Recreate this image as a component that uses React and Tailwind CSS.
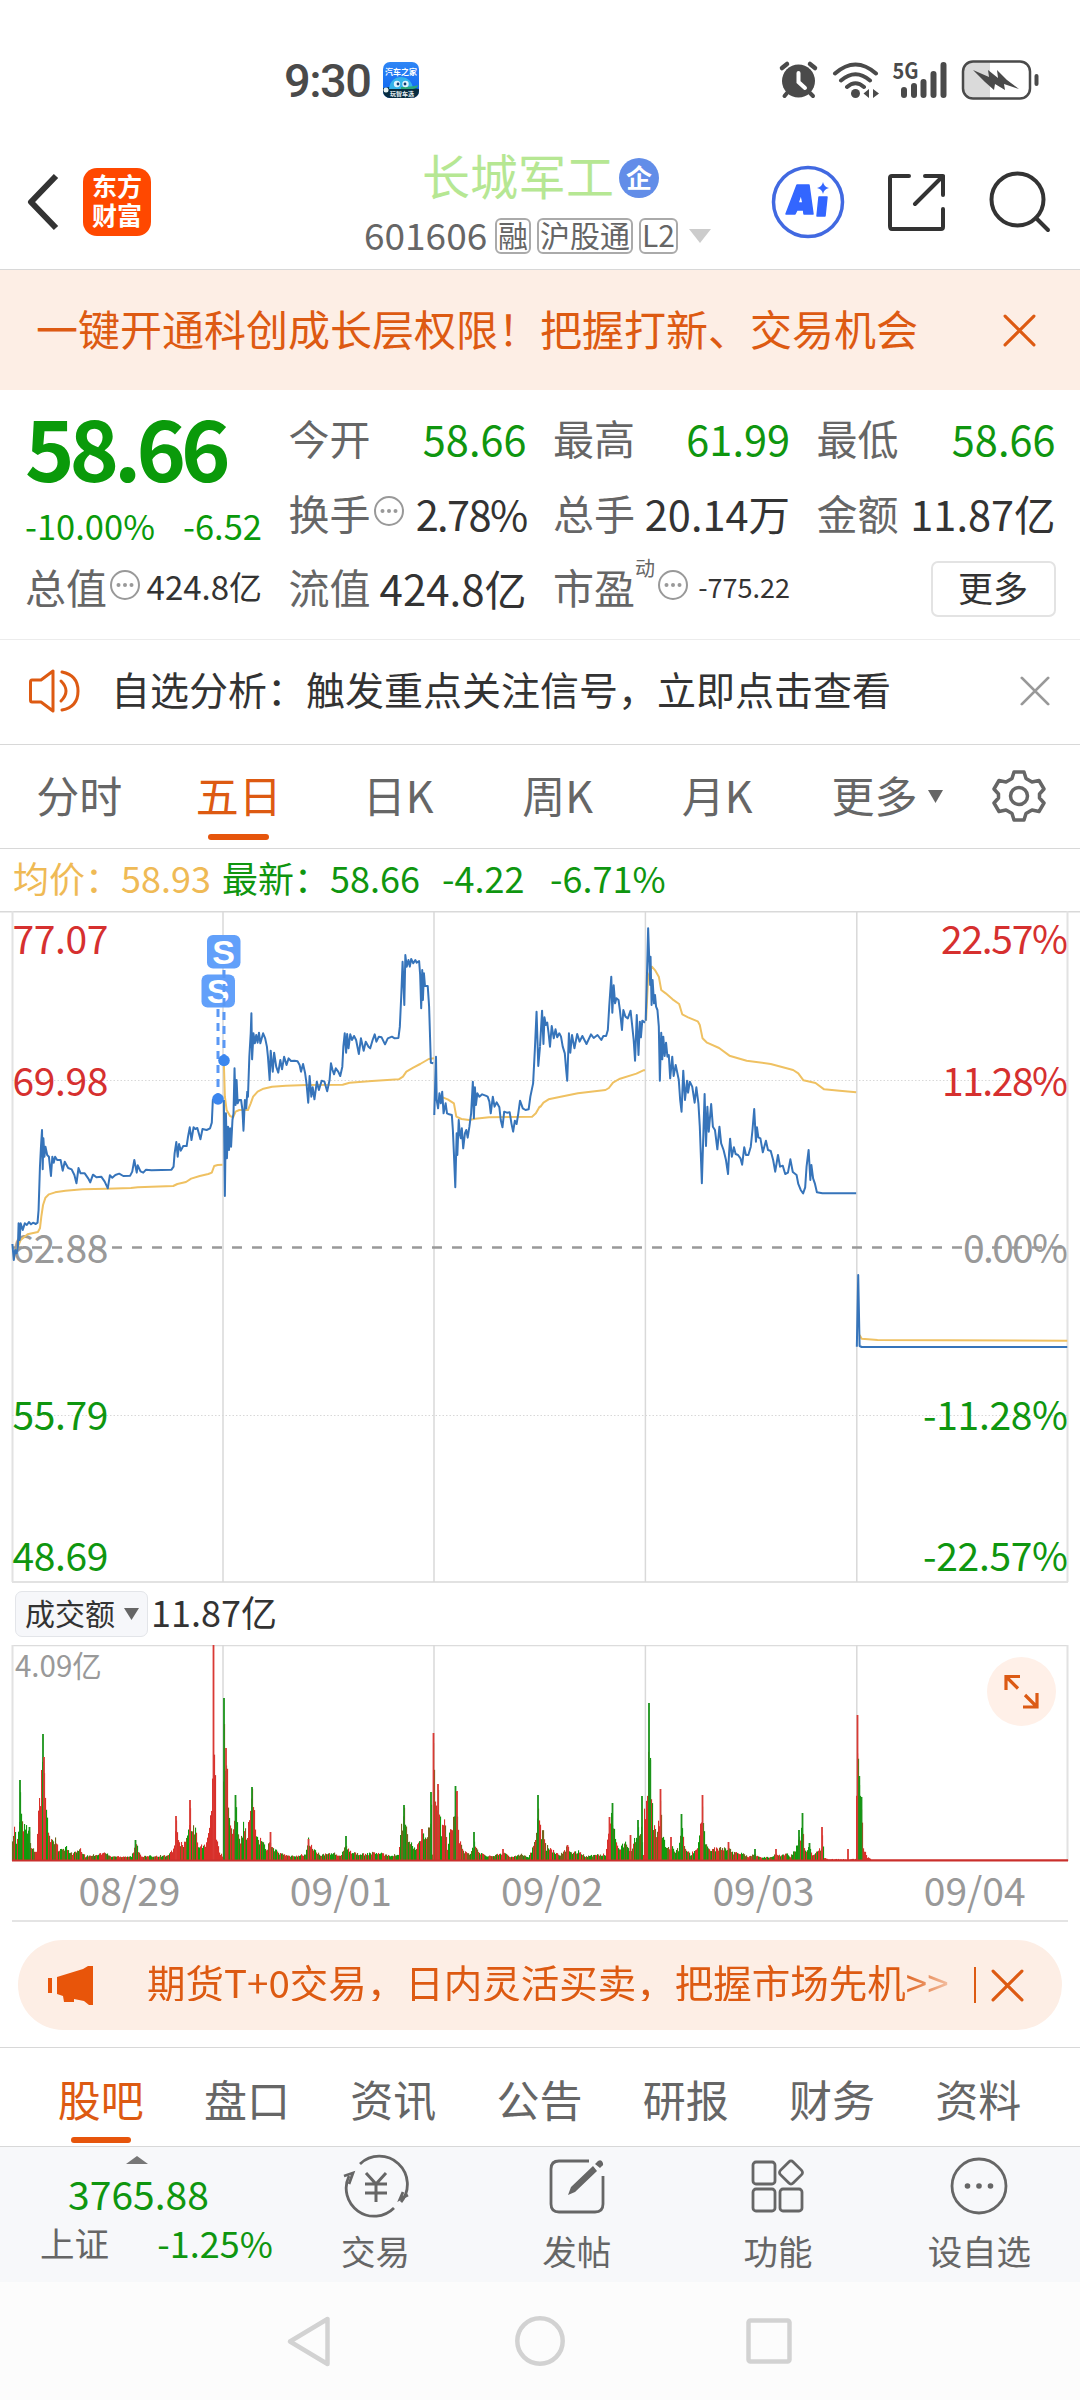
const gridX = [223, 434, 645.4, 856.8];

// price lines, left half (days 1-3) and right half (days 3-5)
const priceLeft = [
  '36,1032 40,1080 44,1050 48,1060 52,1040 54,970 57,1020 60,970 66,990 72,970 78,975 84,966 90,973 96,968 104,972 109,968 112,930 116,800 119,740 122,690 124,808 126,715 129,770 132,740 137,765 142,770 148,828 152,770 156,788 160,770 166,780 176,780 182,812 188,785 198,804 208,808 216,825 222,850 228,804 234,820 246,820 256,835 262,847 270,824 280,832 294,830 304,845 313,865 319,826 326,833 335,825 346,821 358,828 378,827 384,815 390,780 397,818 400,796 408,814 416,818 424,809 440,811 498,809 504,800 507,760 512,726 516,770 520,732 525,752 532,738 542,738 546,710 551,682 556,720 562,682 567,687 573,684 582,718 588,687 600,690 610,685 615,668 618,600 624,597 646,597',
  '650,600 653,888 656,640 659,775 662,680 665,750 668,685 671,740 675,660 678,640 681,505 684,615 687,540 690,610 694,600 700,600 704,630 707,692 711,600 715,625 718,575 720,590 724,470 728,400 730,340 732,478 736,400 740,430 744,405 748,428 752,398 756,430 760,415 764,400 770,415 775,440 778,470 783,540 786,452 792,515 796,458 802,500 808,518 814,480 819,508 825,470 832,495 838,475 845,483 855,482 864,484 870,495 874,515 880,492 886,520 890,550 895,608 899,528 904,590 908,562 913,598 920,545 926,570 934,542 942,545 950,574 957,540 961,490 965,508 970,523 975,505 982,515 988,528 994,500 997,440 1001,400 1005,458 1008,402 1012,445 1017,403 1022,420 1028,408 1034,420 1042,462 1048,415 1056,452 1062,425 1070,440 1075,445 1082,420 1088,403 1093,425 1100,410 1108,412 1118,433 1126,415 1138,410 1146,415 1157,414 1161,380 1165,290 1169,185 1174,315 1177,165 1181,200 1186,180 1190,200 1194,177 1200,190 1206,180 1210,188 1217,183 1220,225 1223,325 1226,210 1228,300 1231,220 1234,258 1242,258 1246,320 1249,420 1251,488 1258,490',
  '1261,645 1266,470 1268,600 1272,625 1276,580 1280,610 1284,575 1288,640 1294,610 1298,640 1304,643 1312,645 1315,690 1318,760 1322,862 1326,700 1328,765 1332,660 1335,700 1338,715 1341,685 1345,745 1350,700 1354,690 1358,713 1363,680 1368,640 1373,545 1376,655 1379,562 1382,615 1386,580 1392,590 1400,583 1410,587 1416,590 1421,605 1425,640 1431,590 1436,620 1442,607 1450,622 1454,660 1459,682 1464,635 1472,638 1480,637 1485,670 1490,695 1495,662 1500,672 1505,640 1510,602 1518,625 1526,630 1535,628 1540,590 1548,550 1553,450 1558,335 1563,498 1568,440',
];
const priceRight = [
  '0,440 6,332 10,432 13,352 17,375 21,368 25,400 29,440 34,378 40,415 45,388 50,412 56,400 61,410 66,440 72,460 76,510 79,542 84,400 88,458 93,405 100,445 108,402 115,425 123,408 135,432 148,403 156,414 167,405 178,420 184,408 192,408 197,390 201,320 207,230 210,338 214,256 218,310 222,295 228,300 232,330 238,390 242,330 248,350 255,355 263,332 267,370 272,420 276,482 281,345 286,465 290,365 293,412 297,362 305,368',
  '307,362 310,250 314,85 318,200 320,255 321,170 324,315 327,240 331,310 334,285 337,320 341,330 345,380 348,542 352,398 355,478 358,410 362,468 366,428 370,470 374,465 378,535 384,470 388,528 394,495 398,515 403,540 407,600 411,635 416,512 421,600 427,542 430,578 435,545 442,560 449,608 454,562 460,610 464,680 470,850 475,680 478,582 482,738 486,620 490,695 497,612 502,680 508,690 515,748 521,680 526,730 533,750 540,780 546,822 549,760 552,716 557,770 563,742 568,762 575,765 582,775 587,794 593,742 598,765 605,765 612,740 617,690 622,627 627,725 630,682 634,712 640,715 647,757 656,722 662,750 670,753 677,780 683,815 691,765 697,800 705,797 712,822 720,818 727,778 734,816 745,825 750,852 757,870 764,880 770,862 774,800 780,750 785,840 788,795 793,835 798,850 804,877 820,880 918,880',
  '920,1340 924,1125 928,1338 934,1341 1531,1341',
];
const avgLeft = [
  '45,1058 60,1020 80,1003 110,996 116,985 120,950 125,915 132,893 142,883 160,877 190,872 240,868 310,866 380,864 400,862 440,860 503,858 515,852 540,846 555,836 580,828 605,822 615,818 622,798 632,795 646,794',
  '650,490 653,590 658,630 668,648 677,652 684,635 695,630 720,630 728,610 735,590 748,575 765,566 790,560 830,557 890,555 995,554 1015,548 1080,543 1158,538 1170,530 1180,515 1200,503 1220,492 1245,477 1260,475',
  '1280,590 1300,598 1318,610 1325,650 1340,657 1362,660 1380,656 1420,652 1545,650 1556,640 1568,618',
];
const avgRight = [
  '0,622 10,608 25,598 60,590 110,580 190,570 200,564 212,548 230,537 280,521 300,511 305,511',
  '308,362 314,230 325,200 335,212 345,230 352,270 365,280 385,298 404,312 413,343 430,352 458,364 464,375 472,415 485,428 520,444 550,467 600,482 670,492 735,510 750,520 765,541 800,549 825,568 870,572 918,577',
  '928,1305 934,1316 980,1320 1531,1322',
];

// volume outline: x, height
const volume = [
  [12, 24], [14, 35], [16, 20], [18, 30], [19, 40], [20, 70], [22, 49], [24, 35], [26, 39], [29, 34], [30, 18], [34, 10], [36, 12], [37, 38], [39, 68], [41, 90], [43, 110], [45, 72],
  [47, 44], [49, 25], [52, 25], [56, 22], [58, 10], [66, 13], [72, 7], [80, 11], [85, 4], [105, 8], [110, 4], [131, 4], [136, 17], [140, 6], [142, 4],
  [168, 5], [173, 12], [176, 42], [178, 21], [184, 18], [188, 32], [190, 50], [192, 32], [194, 36], [198, 20], [202, 14], [206, 22], [209, 34], [211, 60],
  [213, 120], [215, 90], [216, 25], [219, 8], [222, 5], [223, 90], [224, 140], [226, 113], [229, 53], [232, 27], [235, 60], [237, 46], [240, 25], [243, 38],
  [247, 28], [249, 45], [251, 74], [253, 66], [255, 33], [258, 25], [263, 20], [266, 12], [270, 24], [273, 12], [280, 7], [290, 4], [305, 6], [308, 22],
  [313, 12], [320, 5], [332, 8], [340, 4], [344, 12], [346, 20], [349, 10], [360, 6], [375, 8], [390, 5], [398, 6], [401, 37], [404, 50], [406, 37],
  [409, 20], [415, 12], [422, 28], [426, 22], [428, 32], [431, 66], [432, 5], [433, 110], [435, 68], [438, 72], [441, 35], [444, 44], [447, 15], [449, 30], [452, 30],
  [455, 70], [457, 60], [459, 25], [463, 10], [470, 6], [474, 20], [478, 8], [490, 4], [503, 8], [510, 3], [521, 7], [528, 3], [532, 12], [536, 30],
  [538, 62], [541, 32], [543, 34], [546, 15], [552, 10], [560, 6], [567, 14], [572, 8], [578, 10], [585, 4], [598, 6], [605, 6], [608, 30], [612, 52],
  [615, 26], [620, 12], [624, 21], [630, 10], [634, 22], [638, 32], [641, 42], [643, 5], [644, 52], [647, 70], [649, 140], [651, 75], [653, 36], [657, 28], [660, 60], [662, 30],
  [666, 13], [670, 16], [674, 10], [678, 12], [681, 42], [684, 14], [690, 6], [696, 12], [699, 32], [702, 60], [704, 28], [708, 14], [714, 12], [727, 14],
  [732, 8], [740, 8], [748, 4], [755, 6], [760, 3], [770, 3], [776, 7], [780, 5], [786, 7], [790, 4], [795, 12], [798, 20], [802, 40], [804, 12],
  [806, 8], [809, 14], [812, 5], [818, 12], [821, 12], [822, 30], [824, 3], [830, 2], [855, 2], [857, 120], [859, 85], [861, 73], [863, 15], [867, 4], [872, 1], [1068, 1],
];
const spikes = [
  [20, 81, 'g'], [43, 127, 'g'], [44, 104, 'r'], [29.5, 34, 'g'], [135.5, 21, 'g'], [176, 45, 'r'], [190, 61, 'r'], [213.5, 216, 'r'], [224, 163, 'g'], [226, 113, 'r'],
  [235.5, 66, 'g'], [252, 74, 'g'], [270.5, 29, 'r'], [308.5, 22, 'r'], [346, 25, 'g'], [404, 56, 'g'], [422, 32, 'r'], [431, 69, 'g'], [433.5, 128, 'r'], [438, 77, 'r'],
  [455.5, 75, 'g'], [457, 70, 'r'], [474, 29, 'g'], [503, 12, 'r'], [538, 66, 'g'], [567.5, 16, 'r'], [609.5, 44, 'r'], [612.5, 58, 'g'], [630.5, 26, 'r'], [638, 41, 'g'],
  [642, 65, 'g'], [649, 158, 'g'], [650.2, 101, 'g'], [660.5, 72, 'r'], [671, 24, 'r'], [681.5, 47, 'g'], [702.5, 66, 'r'], [728.5, 19, 'r'], [755, 12, 'g'], [776, 12, 'r'],
  [799, 31, 'g'], [802.5, 48, 'g'], [809.5, 18, 'g'], [822, 34, 'r'], [848, 12, 'r'], [857.5, 146, 'r'], [859.3, 85, 'g'], [861.5, 64, 'g'],
];
const redZones = [[36, 41], [170, 178], [206, 222], [232, 234], [247, 253], [606, 610], [643, 648], [824, 857], [863, 1068]];

function noise(n) {
  const v = Math.sin(n * 127.1) * 43758.5453;
  return v - Math.floor(v);
}

const bars = [];
for (let x = 12; x < 1068; x++) {
  let k = 0;
  while (k < volume.length - 2 && volume[k + 1][0] <= x) k++;
  const [x0, h0] = volume[k];
  const [x1, h1] = volume[k + 1];
  const top = h0 + ((h1 - h0) * (x - x0)) / (x1 - x0);
  const h = x > 870 ? 1.5 : Math.max(1.5, top * (0.68 + noise(x) * 0.4) + (top < 15 && x < 820 ? 1 : 0));
  const red = redZones.some(([a, b]) => x >= a && x <= b) || noise(x + 3000) > 0.66;
  bars.push([x, h, red ? '#d8302a' : noise(x + 9000) > 0.6 ? '#71651a' : '#109a0c']);
}

const stats = [
  { label: '今开', value: '58.66', color: 'text-[#0f960f]' },
  { label: '最高', value: '61.99', color: 'text-[#0f960f]' },
  { label: '最低', value: '58.66', color: 'text-[#0f960f]' },
  { label: '换手', value: '2.78%', color: 'text-[#333] tracking-[-1.6px]', tip: true },
  { label: '总手', value: '20.14万', color: 'text-[#333]' },
  { label: '金额', value: '11.87亿', color: 'text-[#333]' },
];
const periods = ['分时', '五日', '日K', '周K', '月K'];
const sections = ['股吧', '盘口', '资讯', '公告', '研报', '财务', '资料'];

function Tip() {
  return (
    <svg className="w-[32px] h-[32px] shrink-0 mx-[2px] mt-[-4px]" viewBox="0 0 32 32" fill="none">
      <circle cx="16" cy="16" r="14" stroke="#999" strokeWidth="2" />
      <g fill="#999">
        <circle cx="9.5" cy="16" r="2" /><circle cx="16" cy="16" r="2" /><circle cx="22.5" cy="16" r="2" />
      </g>
    </svg>
  );
}

function Close({ className, width = 3 }) {
  return (
    <svg className={className} viewBox="0 0 32 32" fill="none" stroke="currentColor" strokeWidth={width} strokeLinecap="round">
      <path d="M2 2 30 30M30 2 2 30" />
    </svg>
  );
}

function StatusBar() {
  return (
    <div className="h-[135px] pt-[25px] flex items-center text-[#4a4a4a]">
      <div className="ml-[284px] w-[89px] text-[47px] font-medium font-[Roboto,sans-serif] leading-none tracking-[-1.5px]">9:30</div>
      <svg className="w-[36px] h-[36px] ml-[10px]" viewBox="0 0 36 36">
        <defs>
          <clipPath id="app"><rect width="36" height="36" rx="7" /></clipPath>
          <linearGradient id="sky" x1="0" y1="0" x2="0" y2="1"><stop offset="0" stopColor="#2f86f5" /><stop offset="1" stopColor="#0a62f0" /></linearGradient>
        </defs>
        <g clipPath="url(#app)">
          <rect width="36" height="36" fill="url(#sky)" />
          <path d="M0 26Q18 23 36 27V36H0Z" fill="#072c3f" />
          <path d="M6 27C7 11 29 11 30 27Z" fill="#33b3ea" />
          <path d="M18 27h12q5-1 5-4-6 2-17 2Z" fill="#2ba87c" />
          <circle cx="14" cy="22" r="3.2" fill="#dff4ff" /><circle cx="22.500" cy="22" r="3.200" fill="#dff4ff" />
          <circle cx="15" cy="22" r="1.400" fill="#123b70" /><circle cx="22" cy="22" r="1.400" fill="#123b70" />
          <circle cx="3" cy="28" r="2.500" fill="#e8f4f4" />
          <text x="18" y="13" fontSize="8" fontWeight="700" fill="#fff" textAnchor="middle">汽车之家</text>
          <text x="19" y="34" fontSize="6" fontWeight="700" fill="#e9f1f4" textAnchor="middle">玩智车选</text>
        </g>
      </svg>
      <svg className="w-[262px] h-[48px] ml-[358px]" viewBox="777 55 262 48" fill="none" stroke="#4a4a4a">
        <circle cx="798.500" cy="80" r="16.500" fill="#4a4a4a" stroke="none" />
        <path d="M782 67 787 63M815 67 810 63" strokeWidth="4.500" strokeLinecap="round" />
        <path d="M787 92 784.500 95M810 92 813 95" strokeWidth="4" strokeLinecap="round" />
        <path d="M798.500 72V81L805 87" stroke="#fff" strokeWidth="4" strokeLinecap="round" />
        <path d="M835 72.500Q855.500 54.500 876 72.500M841 79.500Q855.500 67 870 79.500M847 86Q855.500 78.500 864 86" strokeWidth="4" strokeLinecap="round" />
        <circle cx="855.500" cy="92.500" r="4.500" fill="#4a4a4a" stroke="none" />
        <path d="M863.500 92.500 869 88V97ZM879 92.500 873 88V97Z" fill="#4a4a4a" stroke="none" />
        <text x="892.500" y="78" fontSize="22" fontWeight="700" fill="#4a4a4a" stroke="none" textLength="26" lengthAdjust="spacingAndGlyphs">5G</text>
        <path d="M904 89V94M914 85V94M923.500 81V94M933.500 73V94M943.500 64V94" strokeWidth="6" strokeLinecap="round" />
        <path d="M972 60.500H990V97.500H972Q963 97.500 963 88.500V69.500Q963 60.500 972 60.500Z" fill="#dadada" stroke="none" />
        <rect x="963" y="60.500" width="67" height="37" rx="10" strokeWidth="2.500" />
        <path d="M1036.500 75V83" strokeWidth="4" strokeLinecap="round" />
        <path d="M973 69 989 76 988 69 998 77 997 69 1007 79 1019 88 1004 83 1005 89 995 83 994 89 985 81Z" fill="#4a4a4a" stroke="none" />
      </svg>
    </div>
  );
}

function Header() {
  const tag = 'h-[36px] px-px border-2 border-[#aaa] rounded-[6px] text-[30px] leading-[29px] text-[#666] whitespace-nowrap';
  return (
    <div className="h-[135px] border-b border-[#d8d8d8] flex items-center">
      <svg className="w-[34px] h-[58px] ml-[26px]" viewBox="0 0 34 58" fill="none" stroke="#333" strokeWidth="6">
        <path d="M30 3 5 29 30 55" strokeLinejoin="round" />
      </svg>
      <div className="ml-[23px] w-[68px] h-[68px] rounded-[14px] bg-[#ff4800] text-white text-[25px] font-bold leading-[29px] text-center pt-[3px]">
        东方<br />财富
      </div>
      <div className="ml-[213px] w-[352px] mt-[9px]">
        <div className="h-[58px] pl-[58px] flex items-center text-[#b6e793]">
          <span className="text-[48px] leading-[58px] mt-[-8px]">长城军工</span>
          <span className="w-[40px] h-[40px] ml-[5px] rounded-full bg-[#628de8] text-white text-[26px] font-bold leading-[37px] text-center">企</span>
        </div>
        <div className="h-[58px] flex items-center gap-[6px]">
          <span className="text-[37px] leading-[58px] mt-[-4px] w-[125px] text-[#666] whitespace-nowrap">601606</span>
          <span className={tag}>融</span>
          <span className={tag}>沪股通</span>
          <span className={tag}>L2</span>
          <svg className="w-[22px] h-[14px] ml-[5px]" viewBox="0 0 22 14"><path d="M0 0H22L11 14Z" fill="#ccc" /></svg>
        </div>
      </div>
      <svg className="w-[74px] h-[74px] ml-[55px]" viewBox="0 0 74 74">
        <circle cx="37" cy="37" r="34.500" fill="none" stroke="#4169e1" strokeWidth="3.500" />
        <path d="M26 20H38L42 49H33L32.500 45H26L24 49H15ZM30 29 27 38H32Z" fill="#3366ff" stroke="#3366ff" strokeWidth="1.500" strokeLinejoin="round" fillRule="evenodd" />
        <path d="M48 32H56L54 51H46Z" fill="#3366ff" stroke="#3366ff" strokeWidth="1.500" strokeLinejoin="round" />
        <path d="M52 17Q53 22 58 23Q53 24 52 29Q51 24 46 23Q51 22 52 17Z" fill="#3366ff" />
      </svg>
      <svg className="w-[58px] h-[58px] ml-[42px]" viewBox="0 0 58 58" fill="none" stroke="#333" strokeWidth="4" strokeLinecap="round" strokeLinejoin="round">
        <path d="M22 3H5Q3 3 3 5V53Q3 56 5 56H54Q56 56 56 54V36M38 3H56V22M56 3 28 31" />
      </svg>
      <svg className="w-[62px] h-[62px] ml-[44px]" viewBox="0 0 62 62" fill="none" stroke="#333" strokeWidth="4" strokeLinecap="round">
        <circle cx="28.500" cy="28.500" r="26" /><path d="M47 47 59 59" />
      </svg>
    </div>
  );
}

function Quote() {
  return (
    <div className="h-[250px] border-b border-[#ececec] pt-[13px] pl-[25px] grid grid-cols-[237px_238px_237px_239px] grid-rows-[76px_74px_74px] gap-x-[26.500px] whitespace-nowrap">
      <div className="row-span-2 text-[#0a9a0a]">
        <div className="h-[98px] text-[84px] font-bold leading-[86px] tracking-[-5px]">58.66</div>
        <div className="h-[52px] flex justify-between text-[34.500px] leading-[48px]"><span>-10.00%</span><span>-6.52</span></div>
      </div>
      {stats.map((s) => (
        <div key={s.label} className="flex items-center pb-[6px]">
          <span className="text-[41px] text-[#666]">{s.label}</span>
          {s.tip && <Tip />}
          <span className={`ml-auto text-[41.500px] ${s.color}`}>{s.value}</span>
        </div>
      ))}
      <div className="flex items-center pb-[6px]">
        <span className="text-[41px] text-[#666]">总值</span><Tip />
        <span className="ml-auto text-[33px] text-[#333]">424.8亿</span>
      </div>
      <div className="flex items-center pb-[6px]">
        <span className="text-[41px] text-[#666]">流值</span>
        <span className="ml-auto text-[42px] text-[#333]">424.8亿</span>
      </div>
      <div className="flex items-center pb-[6px]">
        <span className="text-[41px] text-[#666]">市盈</span>
        <span className="text-[20px] leading-none text-[#666] mb-[38px]">动</span><Tip />
        <span className="ml-auto text-[27px] text-[#333]">-775.22</span>
      </div>
      <div className="flex items-center justify-end">
        <button className="w-[125px] h-[56px] border-2 border-[#e3e3e3] rounded-[7px] text-[35px] leading-[44px] text-[#333] mt-[-2px] pb-[4px]">更多</button>
      </div>
    </div>
  );
}

function PriceChart() {
  const left = ['77.07', '69.98', '62.88', '55.79', '48.69'];
  const right = ['22.57%', '11.28%', '0.00%', '-11.28%', '-22.57%'];
  const widths = [127, 126, 105, 145, 145];
  const base = [43, 184.5, 352, 519, 660];
  const colors = ['#d6302f', '#d6302f', '#999', '#0f960f', '#0f960f'];
  return (
    <svg className="block w-[1080px] h-[672px]" viewBox="0 0 1080 672" fill="none">
      <g stroke="#d9d9d9" strokeWidth="1.500">
        <path d="M0 .75H1080M12 671H1068" />
        <path d="M12.500 0V671M1067.500 0V671" stroke="#e2e2e2" strokeWidth="2" />
        {gridX.map((x) => <path key={x} d={`M${x} 1V671`} />)}
        <path d="M12 169.500H1068M12 504.500H1068" stroke="#d8d8d8" strokeWidth="1" strokeDasharray="1.500 2" />
      </g>
      {left.map((t, i) => (
        <g key={t} fontSize="39" fill={colors[i]}>
          <text x="12.500" y={base[i]} textLength="96">{t}</text>
          <text x={1068 - widths[i]} y={base[i]} textLength={widths[i]}>{right[i]}</text>
        </g>
      ))}
      <path d="M12 336.500H1068" stroke="#999" strokeWidth="2.500" strokeDasharray="10 10" />
      <g strokeWidth="2" strokeLinejoin="round">
        <g transform="translate(0 -11) scale(.34439 .33333)">
          {avgLeft.map((p) => <polyline key={p} points={p} stroke="#efc162" vectorEffect="non-scaling-stroke" />)}
          {priceLeft.map((p) => <polyline key={p} points={p} stroke="#3674ba" vectorEffect="non-scaling-stroke" />)}
        </g>
        <g transform="translate(540 -11) scale(.34439 .33333)">
          {avgRight.map((p) => <polyline key={p} points={p} stroke="#efc162" vectorEffect="non-scaling-stroke" />)}
          {priceRight.map((p) => <polyline key={p} points={p} stroke="#3674ba" vectorEffect="non-scaling-stroke" />)}
        </g>
      </g>
      {/* sell markers */}
      <rect x="207" y="24" width="33.500" height="33.500" rx="6" fill="#62a0fa" />
      <rect x="201.500" y="63.500" width="33.500" height="33" rx="6" fill="#62a0fa" />
      <g fontSize="34" fontWeight="700" fill="#fff" textAnchor="middle" fontFamily="Liberation Sans, sans-serif">
        <text x="223.700" y="53">S</text><text x="218" y="92">S</text>
      </g>
      <g stroke="#5a98f5" strokeWidth="3" strokeDasharray="8 6">
        <path d="M224 59V149M218 98V188" />
      </g>
      <circle cx="224" cy="149.500" r="5.800" fill="#3b86ee" />
      <circle cx="218" cy="188" r="5.800" fill="#3b86ee" />
    </svg>
  );
}

function VolumeChart() {
  const dates = ['08/29', '09/01', '09/02', '09/03', '09/04'];
  return (
    <svg className="block w-[1080px] h-[277px]" viewBox="0 0 1080 277" fill="none">
      <path d="M12 .5H1068" stroke="#dcdcdc" strokeWidth="1.500" />
      <path d="M12.500 0V216M1067.500 0V216" stroke="#e2e2e2" strokeWidth="2" />
      {gridX.map((x) => <path key={x} d={`M${x} 0V216`} stroke="#d9d9d9" strokeWidth="1.500" />)}
      <text x="15" y="32" fontSize="29.500" fill="#999">4.09亿</text>
      {bars.map(([x, h, c]) => <rect key={x} x={x} y={216 - h} width="1.100" height={h} fill={c} />)}
      {spikes.map(([x, h, c]) => <rect key={x} x={x - 0.9} y={216 - h} width="1.800" height={h} fill={c === 'r' ? '#d93a35' : '#1b941b'} />)}
      <path d="M12 215.500H1068" stroke="#c9302c" strokeWidth="1.800" />
      {dates.map((d, i) => (
        <text key={d} x={129.500 + i * 211.300} y="261" fontSize="39" fill="#999" textAnchor="middle" textLength="102">{d}</text>
      ))}
      <path d="M12 276H1068" stroke="#e4e4e4" strokeWidth="2" />
      <circle cx="1021.500" cy="46.500" r="34.500" fill="#fff0e8" />
      <path d="M1006 45V31.500H1020M1007 32.500 1018 43.500M1037 48V62H1023M1036 61 1025 50" stroke="#dc5a14" strokeWidth="3.200" />
    </svg>
  );
}

function BottomItem({ label, children }) {
  return (
    <div className="w-[201.300px] flex flex-col items-center pt-[7px]">
      <svg className="w-[66px] h-[64px]" viewBox="0 0 66 64" fill="none" stroke="#666" strokeWidth="2.800">{children}</svg>
      <span className="text-[34.500px] leading-[50px] mt-[7px] text-[#666]">{label}</span>
    </div>
  );
}

function App() {
  return (
    <div className="w-[1080px] h-[2400px] bg-white overflow-hidden font-['Noto_Sans_CJK_SC',sans-serif]">
      <StatusBar />
      <Header />
      <div className="h-[120px] bg-[#fdeee5] flex items-center justify-between pl-[36px] pr-[44px] text-[#dd5a12]">
        <span className="text-[42px] leading-none mt-[-5px]">一键开通科创成长层权限！把握打新、交易机会</span>
        <Close className="w-[33px] h-[33px]" />
      </div>
      <Quote />
      <div className="h-[105px] border-b border-[#d8d8d8] flex items-center pl-[28px] pr-[30px]">
        <svg className="w-[54px] h-[46px] mt-[-2px]" viewBox="0 0 54 46" fill="none" stroke="#dd5a12" strokeWidth="3" strokeLinejoin="round" strokeLinecap="round">
          <path d="M4 12H13L25 3V43L13 34H4Q2.500 34 2.500 32V14Q2.500 12 4 12ZM33 13Q43 23 33 33M34 4Q50 7 50 23T34 42" />
        </svg>
        <span className="ml-[29px] text-[39px] leading-none text-[#333] mt-[-8px]">自选分析：触发重点关注信号，立即点击查看</span>
        <Close className="ml-auto w-[30px] h-[30px] text-[#999] mt-[-2px]" />
      </div>
      <div className="h-[104px] border-b border-[#d8d8d8] flex text-[43px] text-[#666]">
        {periods.map((p) => (
          <div key={p} className={`w-[159.500px] flex flex-col items-center pr-px ${p === '五日' ? 'text-[#dd5a12]' : ''}`}>
            <span className="h-[89px] leading-[98px]">{p}</span>
            {p === '五日' && <span className="w-[61px] h-[6px] rounded-full bg-[#e6550c]" />}
          </div>
        ))}
        <div className="w-[178px] pl-[34px] flex items-center leading-[98px] pb-[5px]">
          更多
          <svg className="w-[15px] h-[13px] ml-[10px] mt-[5px]" viewBox="0 0 15 13"><path d="M0 0H15L7.500 13Z" fill="#666" /></svg>
        </div>
        <svg className="w-[54px] h-[54px] mt-[24px] ml-[16px]" viewBox="0 0 54 54" fill="none" stroke="#666" strokeWidth="3.500" strokeLinejoin="round">
          <path d="M22 3H32L34 9.500 40 13 47 11.500 52 20 47.500 25V29L52 34 47 42.500 40 41 34 44.500 32 51H22L20 44.500 14 41 7 42.500 2 34 6.500 29V25L2 20 7 11.500 14 13 20 9.500Z" />
          <circle cx="27" cy="27" r="8.500" />
        </svg>
      </div>
      <div className="h-[62px] flex pl-[13px] text-[36px] leading-[56px] text-[#0f960f] whitespace-nowrap">
        <span className="text-[#efba55] w-[209px]">均价：58.93</span>
        <span className="w-[220px]">最新：58.66</span>
        <span className="w-[108px]">-4.22</span>
        <span>-6.71%</span>
      </div>
      <PriceChart />
      <div className="h-[62px] flex items-center pl-[15px] text-[#333]">
        <div className="w-[133px] h-[46px] rounded-[7px] border border-[#e3e5e9] bg-[#f6f7fa] flex items-center pl-[9px]">
          <span className="text-[30px] leading-none mt-[-4px]">成交额</span>
          <svg className="w-[15px] h-[12px] ml-[9px]" viewBox="0 0 15 12"><path d="M0 0H15L7.500 12Z" fill="#666" /></svg>
        </div>
        <span className="text-[36px] leading-none ml-[3px] mt-[-6px]">11.87亿</span>
      </div>
      <VolumeChart />
      <div className="mt-[18px] mx-[18px] h-[90px] rounded-full bg-[#fdeee5] flex items-center text-[#dd5a12]">
        <svg className="w-[47px] h-[42px] ml-[29px]" viewBox="0 0 47 42" fill="#e8550a">
          <path d="M1 14H5V29H1ZM10 13 36 5 41 2H46V41H42L37 37 27 35V38H17L16 32 10 30Z" />
        </svg>
        <span className="ml-[53px] w-[809px] text-[38.500px] leading-none whitespace-nowrap mt-[-7px] [mask-image:linear-gradient(to_right,#000_93%,transparent_102%)]">期货T+0交易，日内灵活买卖，把握市场先机&gt;&gt;</span>
        <span className="w-[2px] h-[36px] bg-[#dd5a12] ml-[18px]" />
        <Close className="w-[33px] h-[33px] ml-[15px]" />
      </div>
      <div className="mt-[17px] h-[100px] border-y border-[#d8d8d8] flex px-[28px] text-[43px] text-[#666]">
        {sections.map((s) => (
          <div key={s} className={`flex-1 flex flex-col items-center pr-px ${s === '股吧' ? 'text-[#dd5a12]' : ''}`}>
            <span className="h-[89px] leading-[100px]">{s}</span>
            {s === '股吧' && <span className="w-[60px] h-[6px] rounded-full bg-[#e6550c]" />}
          </div>
        ))}
      </div>
      <div className="h-[135px] bg-[#f7f8fa] flex">
        <div className="w-[275px] flex flex-col items-center text-[#0f960f]">
          <svg className="w-[22px] h-[8px] mt-[9px]" viewBox="0 0 22 8"><path d="M0 8 11 0 22 8Z" fill="#777" /></svg>
          <div className="text-[39px] leading-[50px] mt-[4px] ml-[2px]">3765.88</div>
          <div className="w-[233px] ml-[38px] flex justify-between items-center leading-[46px] mt-[1px]">
            <span className="text-[34.500px] text-[#666]">上证</span><span className="text-[36px]">-1.25%</span>
          </div>
        </div>
        <BottomItem label="交易">
          <path d="M17 10A28 28 0 0 1 58 48M6 22A28 28 0 0 0 51 54" />
          <path d="M1 22 10 19 6 30M65 41 57 45 60 38" />
          <path d="M23 19 33 30 43 19M33 30V48M22 30H44M22 39H44" strokeWidth="3" />
        </BottomItem>
        <BottomItem label="发帖">
          <path d="M45 7H15Q7 7 7 15V50Q7 58 15 58H51Q59 58 59 50V22" />
          <path d="M24 41 27 33 49 12 53 17 31 38ZM51 10 54 7Q57 5 58.500 8T58 12L56 14Z" fill="#666" stroke="none" />
        </BottomItem>
        <BottomItem label="功能">
          <rect x="8" y="8" width="22" height="22" rx="3" /><rect x="8" y="35" width="22" height="22" rx="3" /><rect x="35" y="35" width="22" height="22" rx="3" />
          <rect x="37" y="9.500" width="18" height="18" rx="3" transform="rotate(45 46 18.500)" />
        </BottomItem>
        <BottomItem label="设自选">
          <circle cx="33" cy="32" r="27" />
          <g fill="#666" stroke="none"><circle cx="21.500" cy="32" r="2.800" /><circle cx="33" cy="32" r="2.800" /><circle cx="44.500" cy="32" r="2.800" /></g>
        </BottomItem>
      </div>
      <div className="h-[118px] bg-[#fcfcfc] flex items-center justify-center pr-[2px]">
        <svg className="w-[506px] h-[54px]" viewBox="286 2314 506 54" fill="none" stroke="#d2d2d2" strokeWidth="4.500" strokeLinejoin="round">
          <path d="M327.500 2319V2364L290 2341.500Z" /><circle cx="540" cy="2341" r="22.700" /><rect x="748.500" y="2320.500" width="41" height="41" rx="2" />
        </svg>
      </div>
    </div>
  );
}

export default App;
